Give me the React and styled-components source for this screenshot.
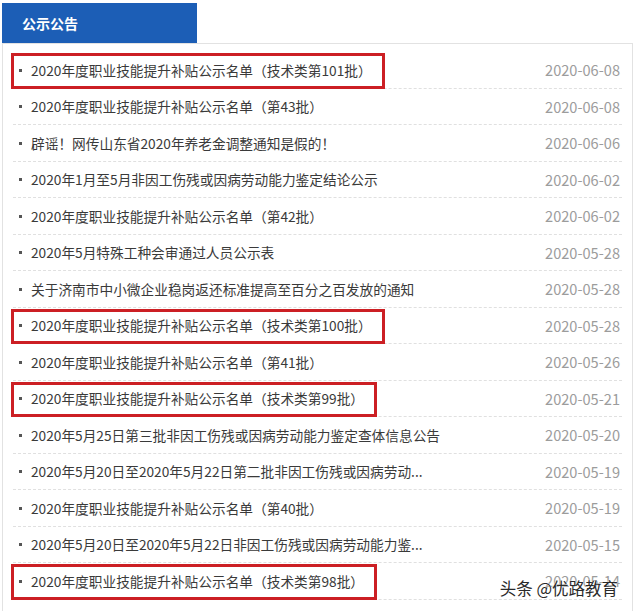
import React from 'react';
import styled, { createGlobalStyle } from 'styled-components';

const GlobalStyle = createGlobalStyle`
  body {
    margin: 0;
    background: #ffffff;
    font-family: "Microsoft YaHei", "Noto Sans CJK SC", "Noto Sans", sans-serif;
  }
`

const Page = styled.div`
  position: relative;
  padding: 3px 0 0 2px;
  width: 631px;
  height: 608px;
  overflow: hidden;
`

const TabBar = styled.div`
  display: flex;
`

const Tab = styled.div`
  width: 175px;
  height: 40px;
  padding-left: 20px;
  display: flex;
  align-items: center;
  background: #1c5eb6;
  color: #ffffff;
  font-size: 14px;
  font-weight: 700;
`

const Panel = styled.div`
  border: 1px solid #e2e2e2;
  padding: 8px 10px 0;
  height: 600px;
`

const Row = styled.div`
  height: 36.5px;
  display: flex;
  align-items: stretch;
  justify-content: space-between;
  border-bottom: 1px dashed #e0e0e0;
  box-sizing: border-box;
`

const Title = styled.div`
  position: relative;
  display: flex;
  align-items: center;
  padding-left: 18px;
  color: #3a3a3a;
  font-size: 13.7px;
  white-space: nowrap;

  &::before {
    content: '';
    position: absolute;
    left: 6px;
    top: 50%;
    width: 3px;
    height: 3px;
    margin-top: -1px;
    background: #555555;
  }

  ${p => p.$marked && `
    &::after {
      content: '';
      position: absolute;
      top: 1px;
      bottom: -1px;
      left: -2px;
      right: -13px;
      border: 3px solid #cc1f24;
    }
  `}
`

const Date = styled.div`
  display: flex;
  align-items: center;
  color: #9c9c9c;
  font-size: 14.6px;
  padding-right: 2px;
`

const Watermark = styled.div`
  position: absolute;
  right: 15px;
  bottom: 11px;
  color: #2a2a2a;
  font-size: 16.5px;
  text-shadow: 0 0 1px #ffffff, 0 0 2px #ffffff;
`

const notices = [
  { title: '2020年度职业技能提升补贴公示名单（技术类第101批）', date: '2020-06-08', marked: true },
  { title: '2020年度职业技能提升补贴公示名单（第43批）', date: '2020-06-08' },
  { title: '辟谣！网传山东省2020年养老金调整通知是假的！', date: '2020-06-06' },
  { title: '2020年1月至5月非因工伤残或因病劳动能力鉴定结论公示', date: '2020-06-02' },
  { title: '2020年度职业技能提升补贴公示名单（第42批）', date: '2020-06-02' },
  { title: '2020年5月特殊工种会审通过人员公示表', date: '2020-05-28' },
  { title: '关于济南市中小微企业稳岗返还标准提高至百分之百发放的通知', date: '2020-05-28' },
  { title: '2020年度职业技能提升补贴公示名单（技术类第100批）', date: '2020-05-28', marked: true },
  { title: '2020年度职业技能提升补贴公示名单（第41批）', date: '2020-05-26' },
  { title: '2020年度职业技能提升补贴公示名单（技术类第99批）', date: '2020-05-21', marked: true },
  { title: '2020年5月25日第三批非因工伤残或因病劳动能力鉴定查体信息公告', date: '2020-05-20' },
  { title: '2020年5月20日至2020年5月22日第二批非因工伤残或因病劳动...', date: '2020-05-19' },
  { title: '2020年度职业技能提升补贴公示名单（第40批）', date: '2020-05-19' },
  { title: '2020年5月20日至2020年5月22日非因工伤残或因病劳动能力鉴...', date: '2020-05-15' },
  { title: '2020年度职业技能提升补贴公示名单（技术类第98批）', date: '2020-05-14', marked: true },
];

const App = () => {
  return <>
    <GlobalStyle />
    <Page>
      <TabBar>
        <Tab>公示公告</Tab>
      </TabBar>
      <Panel>
        {notices.map((n, i) => (
          <Row key={i}>
            <Title $marked={n.marked}>{n.title}</Title>
            <Date>{n.date}</Date>
          </Row>
        ))}
      </Panel>
      <Watermark>头条 @优路教育</Watermark>
    </Page>
  </>
}

export default App;
